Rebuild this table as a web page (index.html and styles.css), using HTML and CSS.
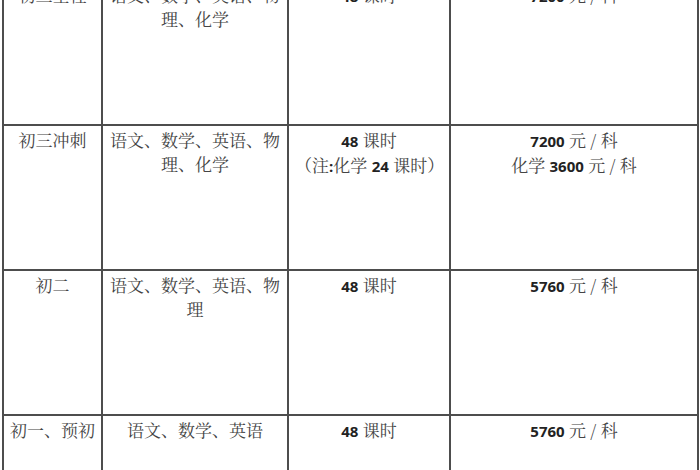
FILE: index.html
```html
<!DOCTYPE html>
<html lang="zh-CN">
<head>
<meta charset="utf-8">
<link rel="stylesheet" href="styles.css">
</head>
<body>
<div class="sheet">
  <div class="cell">初三全程</div>
  <div class="cell">语文、数学、英语、物理、化学</div>
  <div class="cell"><span class="num">48</span> 课时</div>
  <div class="cell"><span class="num">7200</span> 元 / 科</div>

  <div class="cell">初三冲刺</div>
  <div class="cell">语文、数学、英语、物理、化学</div>
  <div class="cell"><span class="num">48</span> 课时<br><span class="line">（注<span class="num">:</span>化学 <span class="num">24</span> 课时）</span></div>
  <div class="cell"><span class="num">7200</span> 元 / 科<br>化学 <span class="num">3600</span> 元 / 科</div>

  <div class="cell">初二</div>
  <div class="cell">语文、数学、英语、物理</div>
  <div class="cell"><span class="num">48</span> 课时</div>
  <div class="cell"><span class="num">5760</span> 元 / 科</div>

  <div class="cell">初一、预初</div>
  <div class="cell">语文、数学、英语</div>
  <div class="cell"><span class="num">48</span> 课时</div>
  <div class="cell"><span class="num">5760</span> 元 / 科</div>
</div>
</body>
</html>
```

FILE: styles.css
```css
html, body {
  margin: 0;
  padding: 0;
  overflow: hidden;
  background: #ffffff;
}

.sheet {
  display: grid;
  grid-template-columns: 97px 184px 160px 246px;
  grid-auto-rows: 143px;
  gap: 2px;
  padding: 2px;
  width: max-content;
  margin: -21px 0 0 2px;
  background: #4d4d4d;
}

.cell {
  background: #ffffff;
  padding: 2px 6px 0;
  text-align: center;
  font-family: "Noto Serif CJK SC", "Source Han Serif SC", "AR PL UMing CN", "Noto Sans CJK SC", serif;
  font-size: 17px;
  line-height: 24px;
  color: #444444;
}

.line {
  white-space: nowrap;
}

.num {
  font-family: "Open Sans", "Liberation Sans", sans-serif;
  font-weight: 700;
  font-size: 15px;
  color: #222222;
}
```
